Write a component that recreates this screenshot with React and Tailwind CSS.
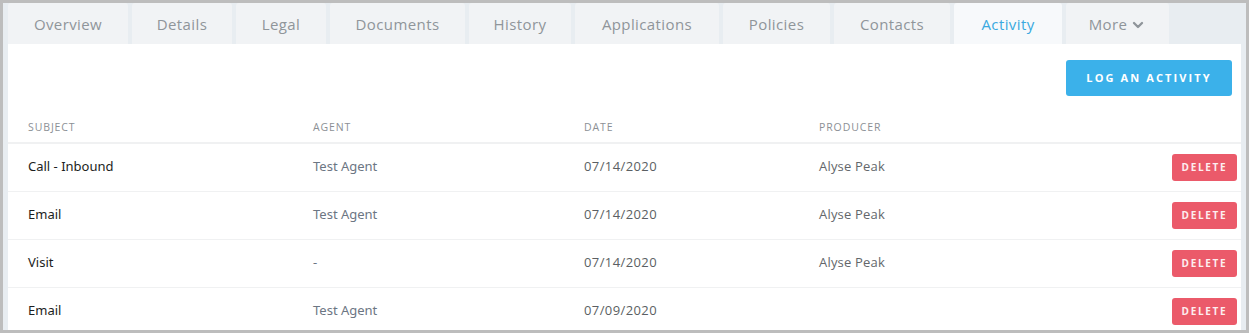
import { ChevronDown } from 'lucide-react';

const tabs = [
  { label: 'Overview', w: 'w-[120px]' },
  { label: 'Details', w: 'w-[100px]' },
  { label: 'Legal', w: 'w-[90px]' },
  { label: 'Documents', w: 'w-[135px]' },
  { label: 'History', w: 'w-[102px]' },
  { label: 'Applications', w: 'w-[144px]' },
  { label: 'Policies', w: 'w-[107px]' },
  { label: 'Contacts', w: 'w-[116px]' },
  { label: 'Activity', w: 'w-[108px]', active: true },
  { label: 'More', w: 'w-[103px]', more: true },
];

const rows = [
  { subject: 'Call - Inbound', agent: 'Test Agent', date: '07/14/2020', producer: 'Alyse Peak' },
  { subject: 'Email', agent: 'Test Agent', date: '07/14/2020', producer: 'Alyse Peak' },
  { subject: 'Visit', agent: '-', date: '07/14/2020', producer: 'Alyse Peak' },
  { subject: 'Email', agent: 'Test Agent', date: '07/09/2020', producer: '' },
];

const cols = 'grid grid-cols-[285px_271px_235px_1fr_auto] items-center pl-[20px] pr-[4px]';

function App() {
  return (
    <div className="w-[1249px] h-[333px] overflow-hidden border-[3px] border-[#bdbdbd] bg-[#e8edf1] px-[5px] font-['Open_Sans',sans-serif]">
      <div className="flex gap-[4px] h-[41px]">
        {tabs.map((t) => (
          <div
            key={t.label}
            className={`${t.w} shrink-0 flex items-center justify-center gap-[3px] pt-[2px] rounded-t-[3px] text-[15px] tracking-[0.4px] ${
              t.active ? 'bg-[#f7f9fb] text-[#3aa9e0]' : 'bg-[#f1f3f5] text-[#8f959a]'
            }`}
          >
            {t.label}
            {t.more && <ChevronDown size={16} strokeWidth={3.5} className="mt-[1px]" />}
          </div>
        ))}
      </div>

      <div className="bg-white h-[300px]">
        <div className="flex justify-end pt-[16px] pr-[9px]">
          <button className="w-[166px] h-[36px] rounded-[3px] bg-[#3bb1ea] text-white text-[11px] font-bold tracking-[2.1px]">
            LOG AN ACTIVITY
          </button>
        </div>

        <div className={`${cols} h-[48px] pt-[18px] border-b-2 border-[#f0f1f2] text-[10.5px] tracking-[0.9px] text-[#8c9095]`}>
          <div>SUBJECT</div>
          <div>AGENT</div>
          <div>DATE</div>
          <div>PRODUCER</div>
          <div />
        </div>

        {rows.map((r, i) => (
          <div key={i} className={`${cols} h-[48px] pb-[2px] border-b border-[#f0f1f2] text-[13px]`}>
            <div className="font-['Noto_Sans',sans-serif] text-[#1c1e21]">{r.subject}</div>
            <div className="font-['Noto_Sans',sans-serif] text-[#6c7683]">{r.agent}</div>
            <div className="text-[#5b5f63] tracking-[0.4px]">{r.date}</div>
            <div className="text-[#63676b] tracking-[0.2px]">{r.producer}</div>
            <button className="w-[65px] h-[27px] mt-[2px] rounded-[3px] bg-[#eb5a6a] text-[#fdeef0] text-[10px] font-bold tracking-[1.7px]">
              DELETE
            </button>
          </div>
        ))}
      </div>
    </div>
  );
}

export default App;
